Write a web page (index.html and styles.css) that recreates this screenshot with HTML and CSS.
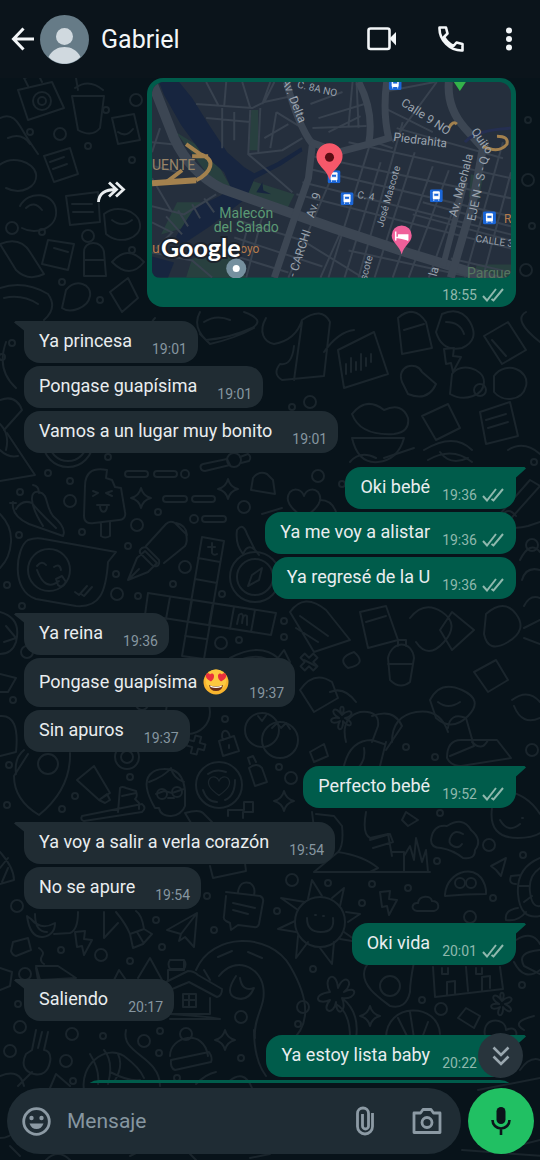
FILE: index.html
```html
<!DOCTYPE html>
<html lang="es">

<head>
    <meta charset="UTF-8">
    <meta name="viewport" content="width=device-width, initial-scale=1.0">
    <title>Gabriel</title>
    <link rel="stylesheet" href="styles.css">
</head>

<body>
    <!-- wallpaper -->
    <svg class="wallpaper" viewBox="0 0 540 1160" preserveAspectRatio="xMidYMin slice" aria-hidden="true">
        <defs>
            <path id="star" d="M0-10Q2-2 10 0Q2 2 0 10Q-2 2-10 0Q-2-2 0-10z" />
            <path id="bolt" d="M-8-11L2-12L1-4L9-3L1 12L-1 3L-6 4z" />
            <path id="plane" d="M-15 5L15-12L12 22L3 12L-3 16L-1 9zM15-12L-1 9" />
            <path id="cloud" d="M-9 7C-16 6-14-2-8-1C-7-9 5-9 6-3C14-3 14 6 8 7z" />
            <path id="flower" d="M0-3C-6-14 6-14 0-3C10-12 14-2 3 0C14 5 8 12 1 3C2 15-8 13-2 3C-12 9-15-2-3 0C-14-6-7-14 0-3z" />
            <path id="cross" d="M-3-9L3-9L3-3L9-3L9 3L3 3L3 9L-3 9L-3 3L-9 3L-9-3L-3-3z" />
            <path id="heart" d="M0 16C-14 6-20-2-14-10C-9-15-2-12 0-6C2-12 9-15 14-10C20-2 14 6 0 16z" />
            <path id="lock" d="M-9-3L6-8L11 7L-5 12zM-5-4C-9-14 0-17 2-7M1 1v3" />
            <g id="ring"><circle r="6" /></g>
            <g id="dot"><circle r="3" /></g>
        </defs>

        <!-- top -->
        <path d="M18 90l34-8 12 26-36 12zM28 86l-4-8 14-4 4 8M75 88q14-10 28 2M72 96l6 34q14 8 22-2l4-32zM78 90l-2-12M0 118q12-6 20 8T38 154M8 138q14-6 22 6" />
        <circle cx="42" cy="101" r="9" />
        <circle cx="42" cy="101" r="4" />
        <path d="M-2 166c14-12 36-4 38 8s-14 22-30 14M44 156l26-8 8 26-24 8zM50 162l14-5M53 169l14-5M112 118l22-4 6 26-22 4zM118 132q8 6 15-3" />
        <path d="M20 206c8-16 34-14 36 4s-20 26-34 18M26 208q8-8 16 2M66 196l32-4 2 30-30 3zM72 204h20M73 212h20M104 214c12-10 34-4 36 10s-20 22-34 10zM112 220q10 8 20 0" />
        <path d="M0 244q20-8 30 8l14 22q-16 8-28-4zM48 240l26 4-6 26-26-6zM54 248l14 4M84 252c0-12 18-12 20 0l2 24H84zM84 260h20M112 262q16-18 32 0q-14 18-32 0" />
        <path d="M0 288q24-8 48 6q10 14-4 26M4 298q18-4 34 6M66 290c10-12 26-6 24 6s-20 18-28 12zM110 292l18-14 10 20-16 14z" />
        <path d="M6 342q-10 28 10 46M0 400q16-6 22 10L4 430M0 424q10 10 6 26" />
        <path d="M155 318c-10 10-4 30 8 34s24-4 28-14M200 312q-8 14 6 28q24-2 46-12q14-8-8-16M204 322q12-8 26-2M200 334l10 10q26-6 44-16" />
        <path d="M266 318c-8 14-2 24 8 26q22-4 28-24q20-14 28 2l-6 54l-42 4q-10-6-2-16q12 2 14-18M302 322l-8 58M324 352q14-20 30-22M338 350l36-18 14 42-44 14zM346 364v10M351 358v14M356 362v8M361 354v16M366 358v8M371 354v8" />
        <path d="M398 318q16-14 28 4l6 26-30 6zM404 330l20-6M442 314q18-8 28 8q10 18-8 26q-20 4-26-16zM446 322q14 0 18 12M484 336l24-14 18 28-24 14zM492 340l14 16M526 312q-14 8 14 30" />
        <path d="M402 382c-6-16 14-22 20-10l14 12q-8 18-28 10zM452 374c8-12 32-6 32 8s-20 20-34 12zM494 376c12-16 36-6 32 10s-24 16-32 6zM352 414q14-18 32-4q18-8 24 8q2 14-14 16-34 2-42-20M422 416l26-12 12 24-24 12zM480 412l30-10 8 34-32 8zM486 420l20-6M488 428l20-6" />
        <path d="M352 438l52 0q-6 22-26 24t-26-24M424 450q30-18 48 0M440 452q10 14 28 6M508 450q16-10 32 4" />

        <!-- middle left -->
        <path d="M0 481l35-6-28-42M0 450q8 8 18 6" />
        <circle cx="68" cy="442" r="25" />
        <circle cx="68" cy="442" r="19" />
        <path d="M13 502q-2 14 16 22l34 12q4-8-10-20c-8-10-4-22-14-24s-10 12 4 34M16 509q6-10 16-6q8 10 24 25M33 485q6 1 6 8M10 503h6" />
        <path d="M107 470c-16-3-22 4-22 16l-1 30c0 6 4 8 10 7l25-3c5 0 7-4 6-8l-4-24-6-1-3-7-6-2zM101 523v13q4 3 9 0v-14M93 491l5 2-5 3M112 491l-6 2 6 3M97 505h12M100 505c0 9 7 9 7 0" />
        <rect x="125" y="471" width="23" height="6" rx="3" />
        <rect x="154" y="471" width="23" height="6" rx="3" />
        <circle cx="185" cy="474" r="4" />
        <rect x="163" y="496" width="24" height="6" rx="3" />
        <rect x="192" y="496" width="23" height="6" rx="3" />
        <circle cx="194" cy="519" r="4" />
        <rect x="202" y="516" width="24" height="6" rx="3" />
        <path d="M203 464l24-5 3 6-25 6c-5 0-6-6-2-7zM240 457l8-3q4 3 1 7l-8 2" />
        <circle cx="234" cy="460" r="7" />
        <path d="M128 580l9-22 8-7 12 12-9 9zM128 580l11-11M142 548q4-2 6 1l11 11q1 5-2 6-4 1-7-3l-10-10q-1-3 2-5M146 546l20-22q4-4 9-1l11 11q2 7-1 12l-21 17M176 523q10 2 11 12" />
        <path d="M28 540q8-3 16-1l72 13-8 10c-2 30-8 46-32 44l-40-7c-26-8-20-52-8-59M37 566q5-6 9-1M54 567q6-4 7 3M37 570q8 22 22 11M56 579l6-3 4 6q-4 7-8 3zM75 592l4 3 8-9M81 594l3 2 8-9" />
        <circle cx="49" cy="570" r="21" />
        <path d="M202 537l22 4-20 118-22-3zM198 558l22 4M195 579l22 4M148 593l128 20-5 22-126-20zM170 597l-4 22M192 600l-4 22M213 603l-4 22M234 607l-4 22M255 610l-4 22M185 636l21 3M212 543v10q2 3 5 1M208 547h7M237 624l2-9q3-3 4 1l-1 7q1-10 5-7l0 9" />
        <circle cx="255" cy="577" r="25" />
        <circle cx="255" cy="577" r="18" />
        <path d="M248 586l4-11 10-7-3 12zM243 554q-8-10-6-24q6-8 10 4l9 18M243 554q6-14 16 1" />
        <path d="M0 514q12 12 11 28T0 568M0 612q22 6 16 30q-4 12-16 12M6 626l10 12-12 4M0 674l16 4-8 14-8 0M0 716q20-2 16 36l-16 4" />

        <!-- middle right -->
        <path d="M253 478q6-8 14-4l6 6 2 14-24-4z" />
        <use href="#heart" x="304" y="502" />
        <path d="M262 514l20-6M320 500q12 0 16 12" />
        <path d="M350 462q10-12 26-4M384 458l30-10M428 460q24-14 44 2M500 514l30-34 10 6-34 38zM516 516q-8-10-14 0q2 16 26 10l12-4" />
        <path d="M520 560q10-20 20-8M522 580q4-14 18-10M524 606q6-12 16-8M524 628l16-8" />
        <path d="M290 612q14-20 36-2l24 30-36 12zM300 616l28 20M296 628l22 14M360 612l26-6 12 34-30 8zM366 622l20-6M410 618q14-18 32-6t2 30-28 0M452 612l22 18-22 20-12-20zM486 614q18-16 30 0t-8 28-24-8zM524 638l16 6" />
        <path d="M230 658q30-16 48 0l6-8 6 12M240 660q22-8 34 4M304 660l12 6M300 690q14-20 32-8l6 16-24 14zM330 692q14-6 26 10M348 668q-12-10 6-16q14 12-6 16" />
        <path d="M388 658c4-18 24-18 26 0l-4 24q-10 8-20-2zM388 664h25M398 646v-6h8v6M430 700q10-20 32-10t6 26-32 2zM438 702q10 8 22 0M474 672l22-12 12 20-20 12zM512 700q16-12 28 2M514 706q8 20 26 12M346 742q-6-24 14-30q20-2 18 14l-6 16M372 716q22-8 30 10l-16 24" />
        <path d="M392 742q0-26 24-30t32 20M448 728q2-16 18-10l8 28-24 10" />
        <use href="#lock" x="228" y="744" />
        <circle cx="262" cy="730" r="17" />
        <circle cx="280" cy="740" r="18" />
        <path d="M258 716l4 5 5-7M272 728l5-5 4 5 5-5 4 6" />
        <use href="#cross" transform="translate(196 745) rotate(15)" />
        <use href="#cross" transform="translate(309 662) rotate(45)" />
        <circle cx="188" cy="712" r="22" />

        <!-- lower left -->
        <path d="M28 754l-14 22q0 24 25 39q32-26 31-62M16 774q-2-16 8-24" />
        <circle cx="48" cy="764" r="10" />
        <circle cx="127" cy="757" r="12" />
        <circle cx="127" cy="757" r="6" />
        <path d="M77 780l17-14 16 27-11 7zM99 800l8-6 3 6-5 3zM82 816l60-12q5 4 0 8l-58 9q-4-1-2-5M118 812l2-24q2-2 6 0l10 3q2 6-1 8l4 4v6M122 796l14-3" />
        <path d="M155 808c-20-34 0-42 18-38q10 4 12 20v16c-4 12-24 14-26 2zM149 782q16-6 22-14q2 10 13 14M156 794l8-3 8 2 12-4M168 798h6M185 813q14-4 18 0l9 9M185 813l6 10" />
        <circle cx="162" cy="794" r="5" />
        <circle cx="177" cy="792" r="5" />
        <circle cx="219" cy="785" r="23" />
        <path d="M203 790q4 12 14 12M208 774q8-6 18-2M235 780q0 16-10 20" />
        <use href="#heart" transform="translate(219 785) scale(.65)" />
        <path d="M249 768q8-6 13 0l5 14-12 4zM250 764l-2-6 5-2 3 6M228 816l0-6 16 0v-8h9v10h-10v6" />
        <path d="M0 852q14 16 14 28l-14 4M0 868l8-10M2 882l6-14M27 916q3 22 16 21q12-2 12-14q-14 8-24-4zM35 914q0 18 12 18M78 912q0 18-8 21l-16 1M104 912v26l14-15M116 912q10 12 14 22l14-5q-2-14-8-18M130 934l3 14 10-4 9-10-8-5M137 932l6 10M210 866l3 12 33-7-1-8" />
        <path d="M226 892l34 4q4 2 3 6l-4 22q-1 4-5 3l-16-2-7 5-1-7-4-2q-3-2-2-5l2-20M233 903l22 5M233 910l15 4M238 892q2-12 12-9q6 4 4 12" />
        <use href="#plane" x="182" y="925" />
        <use href="#bolt" x="83" y="943" />
        <path d="M13 942l15-4 3 12-15 6q-4-1-5-5zM39 948q6 4 3 8-3 5 2 8M36 966l22 0 18 12-36 2zM38 980l-2-12M114 980l5-10 7 10M138 978l12-20 12 22M0 968l12 4-2 14-10 4" />
        <path d="M168 980v-10h16v-10M170 960h14q3 4 0 9h-14q-3-5 0-9M162 984l26-13q6 0 10 4l24 14q0 7-5 8l-28-15-24 10M210 998v16h-40M183 994h13v13h-13zM189 994v13M183 1000h13M170 1014q34 2 50 5h-50" />
        <path d="M196 970c16-38 74-38 94-4s20 60 0 76M219 976c16-20 40-10 44 10s-10 30-8 52M218 957l14-6M248 952l14 6M204 970l6 10" />
        <path d="M240 978q2 14 14 10q-6 14-18 10t0-22" />

        <!-- lower right -->
        <path d="M312 812l2 16M316 814l18 2 8 10q2 20-4 26l-24 20h116M338 852q26 4 40 16l-8 4M366 812q-4 22 4 26l18-4 4 22M370 840l20-6 3 8-20 6M392 852l12 0v20M404 856l6-10 4 14 2-22 6 24 4-12 2 22M310 752l14-8 4 12-14 6zM344 766q6-26 28-26l12 4M358 768q8-8 6-20M380 766l6-24" />
        <path d="M447 758q0-18 14-18l36 0 14 18-50 8q-10 0-14-8M472 742q10 10 16-2" />
        <circle cx="320" cy="922" r="25" />
        <path d="M307 918q0 14 14 14t12-14M315 915h1M323 916h1M308 899l4-19 10 16M332 898l12-10-4 18M346 912l14 2-12 8M344 932l14 10-18-3M334 942l-2 22-12-16M308 942l-12 16 2-22M296 932l-18-3 17-8M298 910l-17-12 24 4" />
        <use href="#bolt" x="388" y="903" />
        <use href="#cloud" x="426" y="904" />
        <use href="#star" x="284" y="801" />
        <path d="M431 840q2-16 16-14q16-10 24 4q12 10 4 20q0 10-12 8q-10-8-22-10q-10 0-10-8M463 834q-8-5-12 2t2 10 9-2" />
        <path d="M445 894c2-24 36-34 41-4v4q-20 0-41 2zM402 820l4-8 12 8-10 6zM491 866l15-8-5 18-5-6z" />
        <circle cx="460" cy="883" r="5" />
        <circle cx="471" cy="883" r="5" />
        <path d="M492 808q-4 30 26 30t32-22M500 820q8 14 20 4M500 792q24-2 40 22M522 818h1" />
        <path d="M540 858q-24 10-22 36t22 22M540 868q-12 8-10 24t10 14M518 886h12M524 902l8-6M516 884q-8 0-5-8l10-1M518 908q-14 2-12 12q12 2 20-8" />
        <path d="M364 974c0-20 40-30 50-12q-4 20-4 30q-4 18-20 14c-10-8-26-18-26-32" />
        <circle cx="390" cy="986" r="10" />
        <path d="M433 967l2 30 68-8-3-22M466 967l2 24M447 994v-12l8-1v12M482 990v-13l8-1v12M442 968v6h6v-6M476 968v6h6v-6M516 940q16-10 24 4M514 962q10 20 26 8M540 950q-24 2-16 16l16 8" />
        <path d="M330 992c-8-14 6-24 8-4c6-16 18-6 6 4c14-8 14 8-2 6c6 14-6 20-6 4c-2 14-16 10-6-2c-14 6-18-6 0-8M336 1004q14 8 14 34M342 998q18 14 14 40" />
        <use href="#star" x="370" y="1016" />
        <use href="#flower" x="502" y="1004" />
        <path d="M458 1018l8-10 14 8-6 12zM386 1038c0-36 52-36 54-4M410 1012l4 26M398 1018l10 20M428 1022l-6 16M486 1040c-8-24 20-24 20-10c12-6 14 8 4 12" />

        <!-- bottom -->
        <path d="M36 1030l-4 20-6 4c-6 12 0 18 8 20s14-2 16-12-4-12-6-12l4-18M42 1032l-4 16M32 1072l-14 14M0 1076q20-8 24 10M84 1090c-4-24 20-46 40-34q16 12 20 22M90 1054q10 16 8 30M104 1050q10 12 4 34M118 1054q6 12-4 28M110 1072q20 10 30 8" />
        <path d="M126 1030c-6 24 34 26 34 56M170 1056c0-20 34-28 38 0M171 1060l38-8q4 6 2 10l-36 8q-5-2-4-10M196 1084q10-10 20-12" />
        <circle cx="186" cy="1034" r="6" />
        <use href="#star" x="225" y="1040" />
        <path d="M50 1088l6-14 14 12M254 1030q0 30 12 46M228 1082q16-14 24 6M470 1072q20-4 40-2M520 1070q10-14 20-10M478 1090l62-12M500 1150l40-10M462 1150l80 6M524 1030q-14-8 10-14" />
        <path d="M0 1138q10 0 16-8M10 1146l10 10M46 1160q12-12 24 0M130 1156l8-4M190 1154l6 6M250 1158l20-4" />
        <use href="#star" x="141" y="498" />
        <use href="#star" x="228" y="489" />
        <use href="#star" x="500" y="110" />
        <use href="#star" x="422" y="490" />
        <use href="#bolt" x="452" y="360" />
        <use href="#flower" x="342" y="718" />

        <!-- loose circles -->
        <use href="#ring" x="70" y="501" />
        <use href="#ring" x="137" y="525" />
        <use href="#ring" x="185" y="567" />
        <use href="#ring" x="117" y="594" />
        <use href="#ring" x="244" y="507" />
        <use href="#ring" x="310" y="402" />
        <use href="#ring" x="221" y="643" />
        <use href="#ring" x="17" y="906" />
        <use href="#ring" x="101" y="955" />
        <use href="#ring" x="25" y="974" />
        <use href="#ring" x="20" y="1027" />
        <use href="#ring" x="72" y="1034" />
        <use href="#ring" x="144" y="1041" />
        <use href="#ring" x="66" y="1061" />
        <use href="#ring" x="10" y="1051" />
        <use href="#ring" x="241" y="1017" />
        <use href="#ring" x="292" y="880" />
        <use href="#ring" x="470" y="917" />
        <use href="#ring" x="489" y="845" />
        <use href="#ring" x="441" y="1009" />
        <use href="#ring" x="303" y="1007" />
        <use href="#ring" x="318" y="476" />
        <use href="#ring" x="532" y="545" />
        <use href="#ring" x="291" y="778" />
        <use href="#ring" x="532" y="750" />
        <use href="#ring" x="27" y="652" />
        <use href="#ring" x="142" y="704" />
        <use href="#ring" x="136" y="100" />
        <use href="#ring" x="60" y="134" />
        <use href="#ring" x="88" y="236" />
        <use href="#ring" x="12" y="228" />
        <use href="#ring" x="528" y="180" />
        <use href="#ring" x="526" y="270" />
        <use href="#ring" x="480" y="390" />
        <use href="#dot" x="12" y="343" />
        <use href="#dot" x="2" y="357" />
        <use href="#dot" x="48" y="473" />
        <use href="#dot" x="70" y="481" />
        <use href="#dot" x="20" y="492" />
        <use href="#dot" x="108" y="457" />
        <use href="#dot" x="82" y="532" />
        <use href="#dot" x="19" y="535" />
        <use href="#dot" x="128" y="546" />
        <use href="#dot" x="158" y="512" />
        <use href="#dot" x="116" y="574" />
        <use href="#dot" x="173" y="584" />
        <use href="#dot" x="138" y="596" />
        <use href="#dot" x="7" y="585" />
        <use href="#dot" x="22" y="606" />
        <use href="#dot" x="222" y="594" />
        <use href="#dot" x="239" y="640" />
        <use href="#dot" x="284" y="621" />
        <use href="#dot" x="284" y="637" />
        <use href="#dot" x="13" y="700" />
        <use href="#dot" x="225" y="719" />
        <use href="#dot" x="9" y="765" />
        <use href="#dot" x="130" y="777" />
        <use href="#dot" x="75" y="796" />
        <use href="#dot" x="62" y="809" />
        <use href="#dot" x="7" y="805" />
        <use href="#dot" x="207" y="896" />
        <use href="#dot" x="156" y="920" />
        <use href="#dot" x="162" y="947" />
        <use href="#dot" x="214" y="930" />
        <use href="#dot" x="61" y="950" />
        <use href="#dot" x="130" y="961" />
        <use href="#dot" x="18" y="1004" />
        <use href="#dot" x="103" y="1036" />
        <use href="#dot" x="160" y="1031" />
        <use href="#dot" x="159" y="1053" />
        <use href="#dot" x="73" y="1081" />
        <use href="#dot" x="241" y="1058" />
        <use href="#dot" x="177" y="1078" />
        <use href="#dot" x="279" y="767" />
        <use href="#dot" x="406" y="747" />
        <use href="#dot" x="435" y="757" />
        <use href="#dot" x="440" y="813" />
        <use href="#dot" x="437" y="861" />
        <use href="#dot" x="523" y="855" />
        <use href="#dot" x="372" y="884" />
        <use href="#dot" x="408" y="888" />
        <use href="#dot" x="328" y="883" />
        <use href="#dot" x="493" y="898" />
        <use href="#dot" x="362" y="903" />
        <use href="#dot" x="277" y="911" />
        <use href="#dot" x="313" y="969" />
        <use href="#dot" x="522" y="985" />
        <use href="#dot" x="422" y="1000" />
        <use href="#dot" x="298" y="1024" />
        <use href="#dot" x="342" y="484" />
        <use href="#dot" x="292" y="407" />
        <use href="#dot" x="534" y="462" />
        <use href="#dot" x="106" y="110" />
        <use href="#dot" x="30" y="132" />
        <use href="#dot" x="88" y="146" />
        <use href="#dot" x="132" y="160" />
        <use href="#dot" x="42" y="232" />
        <use href="#dot" x="132" y="250" />
        <use href="#dot" x="62" y="282" />
        <use href="#dot" x="100" y="300" />
        <use href="#dot" x="528" y="120" />
        <use href="#dot" x="532" y="226" />
    </svg>

    <header class="topbar">
        <button class="icon-btn" aria-label="Volver">
            <svg width="24" height="24" viewBox="0 0 24 24" fill="none" stroke="currentColor" stroke-width="3">
                <path d="M23 12H3M12.500 1.500L2.500 12L12.500 22.500" />
            </svg>
        </button>
        <svg class="avatar" viewBox="0 0 49 49" aria-hidden="true">
            <circle cx="24.500" cy="24.500" r="24.500" fill="#667b87" />
            <circle cx="24.500" cy="21.500" r="8.500" fill="#d0d9df" />
            <path d="M8.500 42C12 35 18 32 24.500 32S37 35 40.500 42C32 51 17 51 8.500 42z" fill="#d0d9df" />
        </svg>
        <h1 class="name">Gabriel</h1>
        <nav class="actions">
            <button class="icon-btn" aria-label="Videollamada">
                <svg width="30" height="24" viewBox="0 0 30 24">
                    <rect x="1.500" y="1.500" width="21" height="20.500" rx="2" fill="none" stroke="currentColor" stroke-width="2.600" />
                    <path d="M22.500 11.500L29 5V18.500z" fill="currentColor" />
                </svg>
            </button>
            <button class="icon-btn" aria-label="Llamar">
                <svg width="26" height="26" viewBox="0 0 26 26" fill="none" stroke="currentColor" stroke-width="2.600" stroke-linejoin="round">
                    <path d="M1.500 1.500H8L9.500 7.500L6 11C8.500 15.500 11 18 15.500 20L18.500 16.500L24.500 18V24.500C12 25 1 14 1.500 1.500z" />
                </svg>
            </button>
            <button class="icon-btn" aria-label="Más opciones">
                <svg width="8" height="24" viewBox="0 0 8 24" fill="currentColor">
                    <circle cx="4" cy="3.500" r="3" />
                    <circle cx="4" cy="12" r="3" />
                    <circle cx="4" cy="20.500" r="3" />
                </svg>
            </button>
        </nav>
    </header>

    <svg class="defs" aria-hidden="true">
        <symbol id="ticks" viewBox="0 0 22 14">
            <path d="M1 8L5 12.500L14 1M9.500 11L11.500 12.500L21 1" fill="none" stroke="currentColor" stroke-width="2" />
        </symbol>
        <symbol id="bus" viewBox="0 0 13 13">
            <rect width="13" height="13" rx="2" fill="#1a66d8" />
            <rect x="3" y="2" width="7" height="8" rx="1" fill="#fff" />
            <path d="M4 4h5v3H4zM4 10v1.500M9 10v1.500" fill="#1a66d8" stroke="#fff" stroke-width=".8" />
        </symbol>
    </svg>

    <main class="chat">
        <div class="row sent">
            <button class="icon-btn forward" aria-label="Reenviar">
                <svg width="29" height="22" viewBox="0 0 29 22" fill="none" stroke="currentColor" stroke-width="2.800">
                    <path d="M1.500 21C2 12 8 8.500 19 8.500M12 1.500L19.500 8.500L12 15.500M19 1.500L26.500 8.500L19 15.500" />
                </svg>
            </button>
            <div class="bubble location">
                <svg class="map" viewBox="0 0 358 195" preserveAspectRatio="xMidYMid slice" role="img" aria-label="Ubicación">
                    <rect width="358" height="195" fill="#252f3d" />
                    <!-- parks -->
                    <g fill="#28403f">
                        <path d="M24 50L60 72L78 104L60 98L36 66z" />
                        <path d="M98 98L142 112L134 128L94 114z" />
                        <path d="M99 28h7v40h-9zM40 176l34-6 20 25H34zM25 120l24 0-20 26-20 6z" />
                        <path d="M324 182h34v13h-38zM318 92l12 3-4 22-10-2z" />
                    </g>
                    <!-- water -->
                    <g fill="#17253f">
                        <path d="M7 0H27L40 16L55 40L75 70L92 85L102 91L125 80L149 65L150 69L129 83L102 97L94 116L59 143L29 163L24 154L42 126L69 113L79 106L72 90L49 70L29 43L12 13z" />
                        <path d="M0 174L22 180L16 195H0z" />
                        <path d="M104 110l6-10 1 8 8 4z" />
                    </g>
                    <!-- small streets -->
                    <g fill="none" stroke="#38424f" stroke-width="2">
                        <path d="M44 22L100 26L112 20L122 0M54 0L66 23M74 0L72 24M90 0L98 26M70 26V66M54 36L98 40M98 28L96 72L124 96L140 110M108 26L106 70M112 20L140 14M124 30L150 46M118 0L110 22M82 30V58M96 72L130 68L150 56M112 56L136 42M124 30L118 66" />
                        <path d="M0 96L20 130M0 124L32 132L64 112M8 46L0 70M0 60L20 62M2 84L26 90M14 134L30 152M26 128L36 144M40 122L48 136M0 140L20 150L4 166M52 116L62 130M0 170L40 178L60 195" />
                        <path d="M94 150L82 195M110 134L94 195M146 124L122 195M190 70L136 195M188 150L168 195M218 60L176 195M228 80L192 195M250 40L206 195M262 70L222 195M280 84L240 195M296 88L256 195M312 95L276 195M350 60L312 195M358 90L330 195" />
                        <path d="M160 74L358 116M154 86L358 134M150 100L358 152M144 112L358 166M196 60L358 96M160 136L176 142M196 168L320 195M86 138L150 158L210 195M82 155L170 184M78 172L136 190M260 132L358 158M270 120L358 144M298 176L358 190" />
                        <path d="M158 22L190 10M166 36L212 22M160 46L214 44M200 0L196 44M176 50L208 34M204 0L206 46M230 10L282 0M232 26L280 50M240 60L284 0M244 46L350 76M222 60L240 66" />
                    </g>
                    <!-- main streets -->
                    <g fill="none" stroke="#3c4653">
                        <path d="M0 0L22 56Q38 90 69 106L125 126L182 146L254 170L358 202" stroke-width="10" />
                        <path d="M134 0Q146 44 160 62L156 96L144 130L122 195" stroke-width="7" />
                        <path d="M158 60L186 70L216 62L236 56Q230 30 234 0M216 62Q222 30 206 0" stroke-width="7" />
                        <path d="M296 0Q294 26 312 46L330 66L320 120L298 195" stroke-width="8" />
                        <path d="M312 100L290 184" stroke-width="6" />
                    </g>
                    <path d="M312 60Q322 48 358 46" fill="none" stroke="#252f52" stroke-width="3" />
                    <g fill="none" stroke="#a3814e">
                        <path d="M0 101L44 98" stroke-width="6" />
                        <path d="M34 62L48 72Q60 76 58 84T44 98M40 74L56 74M30 88L14 100" stroke-width="4" />
                        <path d="M296 46Q300 38 304 42M330 64Q346 72 354 62Q356 54 344 54" stroke-width="3" />
                    </g>

                    <g class="street" text-anchor="middle">
                        <text transform="translate(138 20) rotate(68)">Av. Delta</text>
                        <text class="tiny" transform="translate(164 10) rotate(13)">C. 8A NO</text>
                        <text transform="translate(271 38) rotate(33)">Calle 9 NO</text>
                        <text transform="translate(267 62) rotate(7)">Piedrahita</text>
                        <text transform="translate(165 124) rotate(-73)">Av. 9</text>
                        <text transform="translate(151 172) rotate(-72)">- CARCHI</text>
                        <text class="tiny" transform="translate(239 115) rotate(-74)">José Mascote</text>
                        <text class="tiny" transform="translate(213 117) rotate(8)">C. 4</text>
                        <text transform="translate(312 104) rotate(-75)">Av. Machala</text>
                        <text transform="translate(329 107) rotate(-78)">EJE N - S - Q</text>
                        <text transform="translate(326 61) rotate(55)">Quito</text>
                        <text class="tiny" transform="translate(341 162) rotate(8)">CALLE 3</text>
                        <text class="tiny" transform="translate(217 186) rotate(-75)">scote</text>
                        <text transform="translate(285 190) rotate(-75)">la</text>
                    </g>
                    <g class="place">
                        <text x="0" y="88" class="bridge">UENTE</text>
                        <text x="94" y="136" text-anchor="middle">Malecón</text>
                        <text x="94" y="150" text-anchor="middle">del Salado</text>
                        <text x="314" y="195" class="dim">Parque</text>
                        <text x="0" y="171" class="shop">u</text>
                        <text x="88" y="171" class="shop small">oyo</text>
                        <text x="351" y="141" class="shop small">R</text>
                    </g>
                    <text x="9" y="175" class="google">Google</text>

                    <use href="#bus" x="236" y="-5" width="13" height="13" />
                    <use href="#bus" x="175" y="88" width="13" height="13" />
                    <use href="#bus" x="188" y="110" width="13" height="13" />
                    <use href="#bus" x="277" y="107" width="13" height="13" />
                    <use href="#bus" x="330" y="129" width="13" height="13" />
                    <path d="M301 0H313L307 9z" fill="#34b24a" />
                    <circle cx="84" cy="186" r="10" fill="#76909f" />
                    <circle cx="84" cy="186" r="3.500" fill="#fff" />
                    <path d="M249 172C247 163 239 160 239 153A10 10 0 0 1 259 153C259 160 251 163 249 172z" fill="#f0609a" />
                    <path d="M243 149v9M243 155h12v3M246 152.500h9v2h-9z" fill="#fff" stroke="#fff" stroke-width="1.500" />
                    <path d="M177 98C175 87 164 84 164 74A13 13 0 0 1 190 74C190 84 179 87 177 98z" fill="#f7586a" />
                    <circle cx="177" cy="75" r="4.500" fill="#5c0d14" />
                </svg>
                <span class="time">18:55 <svg class="ticks"><use href="#ticks" /></svg></span>
            </div>
        </div>

        <div class="row first">
            <div class="bubble"><p>Ya princesa</p><span class="time">19:01</span></div>
        </div>
        <div class="row">
            <div class="bubble"><p>Pongase guapísima</p><span class="time">19:01</span></div>
        </div>
        <div class="row">
            <div class="bubble"><p>Vamos a un lugar muy bonito</p><span class="time">19:01</span></div>
        </div>

        <div class="row sent first">
            <div class="bubble"><p>Oki bebé</p><span class="time">19:36 <svg class="ticks"><use href="#ticks" /></svg></span></div>
        </div>
        <div class="row sent">
            <div class="bubble"><p>Ya me voy a alistar</p><span class="time">19:36 <svg class="ticks"><use href="#ticks" /></svg></span></div>
        </div>
        <div class="row sent">
            <div class="bubble"><p>Ya regresé de la U</p><span class="time">19:36 <svg class="ticks"><use href="#ticks" /></svg></span></div>
        </div>

        <div class="row first">
            <div class="bubble"><p>Ya reina</p><span class="time">19:36</span></div>
        </div>
        <div class="row">
            <div class="bubble with-emoji">
                <p>Pongase guapísima
                    <svg class="emoji" viewBox="0 0 26 26" role="img" aria-label="Cara con ojos de corazón">
                        <circle cx="13" cy="13" r="12.500" fill="#f9b52e" />
                        <circle cx="13" cy="11" r="10.500" fill="#fdc940" />
                        <path d="M8 12.500C4.500 10.500 2 8.500 3 5.500C4 3.500 6.500 4 7 5.500C8 4 10.500 4 11 6.500C11.300 9 10 11 8 12.500z" fill="#e9303c" />
                        <path d="M18 12.500C21.500 10.500 24 8.500 23 5.500C22 3.500 19.500 4 19 5.500C18 4 15.500 4 15 6.500C14.700 9 16 11 18 12.500z" fill="#e9303c" />
                        <path d="M6 16Q13 19 20 16Q19 22 13 22T6 16z" fill="#6b2f16" />
                        <path d="M7 16.500Q13 19 19 16.500L18.500 18Q13 20 7.500 18z" fill="#fff" />
                    </svg>
                </p>
                <span class="time">19:37</span>
            </div>
        </div>
        <div class="row">
            <div class="bubble"><p>Sin apuros</p><span class="time">19:37</span></div>
        </div>

        <div class="row sent first">
            <div class="bubble"><p>Perfecto bebé</p><span class="time">19:52 <svg class="ticks"><use href="#ticks" /></svg></span></div>
        </div>

        <div class="row first">
            <div class="bubble"><p>Ya voy a salir a verla corazón</p><span class="time">19:54</span></div>
        </div>
        <div class="row">
            <div class="bubble"><p>No se apure</p><span class="time">19:54</span></div>
        </div>

        <div class="row sent first">
            <div class="bubble"><p>Oki vida</p><span class="time">20:01 <svg class="ticks"><use href="#ticks" /></svg></span></div>
        </div>

        <div class="row first">
            <div class="bubble"><p>Saliendo</p><span class="time">20:17</span></div>
        </div>

        <div class="row sent first">
            <div class="bubble"><p>Ya estoy lista baby</p><span class="time">20:22 <svg class="ticks"><use href="#ticks" /></svg></span></div>
        </div>
        <div class="row sent">
            <div class="bubble next"></div>
        </div>

        <button class="to-bottom" aria-label="Ir al final">
            <svg width="18" height="20" viewBox="0 0 18 20" fill="none" stroke="currentColor" stroke-width="2.600">
                <path d="M1.500 1.500L9 9L16.500 1.500M1.500 10.500L9 18L16.500 10.500" />
            </svg>
        </button>
    </main>

    <footer class="composer">
        <div class="field">
            <button class="icon-btn" aria-label="Emojis">
                <svg width="29" height="29" viewBox="0 0 29 29" fill="currentColor">
                    <circle cx="14.500" cy="14.500" r="12.800" fill="none" stroke="currentColor" stroke-width="2.800" />
                    <circle cx="9.500" cy="11" r="2.200" />
                    <circle cx="19.500" cy="11" r="2.200" />
                    <path d="M7.500 16.500H21.500Q19.500 22 14.500 22T7.500 16.500z" />
                </svg>
            </button>
            <input type="text" placeholder="Mensaje" aria-label="Mensaje">
            <button class="icon-btn" aria-label="Adjuntar">
                <svg width="20" height="30" viewBox="0 0 20 30" fill="none" stroke="currentColor" stroke-width="2.800">
                    <path d="M17.500 7V20.500A7.500 7.500 0 0 1 2.500 20.500V7.500A5.500 5.500 0 0 1 13.500 7.500V20A3 3 0 0 1 7.500 20V8" />
                </svg>
            </button>
            <button class="icon-btn camera" aria-label="Cámara">
                <svg width="30" height="28" viewBox="0 0 30 28" fill="none" stroke="currentColor" stroke-width="2.800" stroke-linejoin="round">
                    <path d="M2 6H8.500L11 2.500H19L21.500 6H28V25.500H2z" />
                    <circle cx="15" cy="15.500" r="5" />
                </svg>
            </button>
        </div>
        <button class="mic" aria-label="Grabar audio">
            <svg width="20" height="28" viewBox="0 0 20 28">
                <rect x="5.500" y="0" width="9" height="17" rx="4.500" fill="currentColor" />
                <path d="M1.500 13A8.500 8.500 0 0 0 18.500 13M10 21.500V28" fill="none" stroke="currentColor" stroke-width="2.600" />
            </svg>
        </button>
    </footer>
</body>

</html>
```
FILE: styles.css
```css
* {
    box-sizing: border-box;
}

body {
    display: flex;
    flex-direction: column;
    position: relative;
    height: 100vh;
    margin: 0;
    overflow: hidden;
    background-color: #08131a;
    color: #e9edef;
    font-family: Roboto, "Liberation Sans", sans-serif;
}

button {
    padding: 0;
    border: none;
    background: none;
    color: inherit;
    cursor: pointer;
}

.icon-btn {
    display: flex;
    flex-shrink: 0;
}

.wallpaper {
    position: absolute;
    top: 0;
    left: 0;
    z-index: -1;
    width: 100%;
    height: 100%;
    fill: none;
    stroke: #1a252c;
    stroke-width: 2;
    stroke-linejoin: round;
    stroke-linecap: round;
}

.defs {
    position: absolute;
    width: 0;
    height: 0;
}

/* top bar */
.topbar {
    display: flex;
    align-items: center;
    flex-shrink: 0;
    height: 78px;
    padding: 0 27px 0 11px;
    background-color: #0b141b;
    color: #f3f6f8;
}

.avatar {
    flex-shrink: 0;
    width: 49px;
    height: 49px;
    margin-left: 5px;
}

.name {
    flex: 1;
    margin: 0 0 0 12px;
    font-size: 25px;
    font-weight: 400;
}

.actions {
    display: flex;
    align-items: center;
    gap: 41px;
}

/* messages */
.chat {
    display: flex;
    flex: 1;
    flex-direction: column;
    gap: 3px;
    position: relative;
    min-height: 0;
    padding: 0 24px;
    overflow: hidden;
}

.row {
    display: flex;
    flex-shrink: 0;
    align-items: center;
}

.row.sent {
    justify-content: flex-end;
}

.row.first {
    margin-top: 11px;
}

.bubble {
    display: flex;
    position: relative;
    padding: 0 11px 0 15px;
    border-radius: 16px;
    background-color: #202c33;
}

.sent .bubble {
    padding-right: 12px;
    background-color: #005c4b;
}

.first .bubble::before {
    content: "";
    position: absolute;
    top: 0;
    left: -10px;
    width: 26px;
    height: 18px;
    background-color: inherit;
    clip-path: polygon(2px 0, 100% 0, 100% 100%, 10px 100%, 10px 10px, 0 2px);
}

.first.sent .bubble::before {
    left: auto;
    right: -10px;
    clip-path: polygon(0 0, 24px 0, 26px 2px, 16px 11px, 16px 100%, 0 100%);
}

.bubble p {
    position: relative;
    margin: 0;
    padding: 8px 0 10px;
    font-size: 18px;
    line-height: 24px;
}

.bubble .time {
    display: flex;
    align-items: center;
    align-self: flex-end;
    gap: 5px;
    position: relative;
    margin: 0 0 6px 20px;
    color: #8696a0;
    font-size: 14px;
    line-height: 16px;
}

.sent .bubble .time {
    margin-left: 12px;
    color: #8fb8ad;
}

.ticks {
    width: 22px;
    height: 14px;
}

.with-emoji p {
    display: flex;
    align-items: center;
    gap: 6px;
    padding: 11px 0 12px;
}

.emoji {
    width: 26px;
    height: 26px;
}

.forward {
    margin-right: 21px;
}

.sent .bubble.location {
    display: block;
    width: 75%;
    padding: 4px 5px;
}

.map {
    display: block;
    width: 100%;
    border-radius: 12px 12px 8px 8px;
}

.sent .location .time {
    justify-content: flex-end;
    margin: 9px 7px 0;
}

.map text {
    font-family: Roboto, sans-serif;
}

.street {
    fill: #9aa3ae;
    font-size: 12px;
}

.street .tiny {
    font-size: 10px;
}

.place {
    fill: #5b9a74;
    font-size: 14px;
}

.place .bridge {
    fill: #978468;
}

.place .dim {
    fill: #55755f;
}

.place .shop {
    fill: #b57b4c;
}

.place .small {
    font-size: 12px;
}

.map .google {
    fill: #fff;
    stroke: #1c232c;
    stroke-width: 4;
    paint-order: stroke;
    font-family: Lato, sans-serif;
    font-size: 25px;
    font-weight: 700;
}

.bubble.next {
    width: 88%;
    height: 42px;
}

.to-bottom {
    display: flex;
    align-items: center;
    justify-content: center;
    position: absolute;
    right: 17px;
    bottom: 5px;
    width: 45px;
    height: 45px;
    border-radius: 50%;
    background-color: #28343c;
    color: #9aa7af;
}

/* composer */
.composer {
    display: flex;
    flex-shrink: 0;
    gap: 7px;
    padding: 5px 6px 6px 7px;
}

.field {
    display: flex;
    flex: 1;
    align-items: center;
    min-width: 0;
    padding: 0 19px 0 15px;
    border-radius: 33px;
    background-color: #1f2c34;
    color: #8c9aa4;
}

.field input {
    flex: 1;
    min-width: 0;
    padding: 0;
    margin: 0 16px;
    border: none;
    outline: none;
    background: none;
    color: #e9edef;
    font-family: inherit;
    font-size: 21px;
}

.field input::placeholder {
    color: #8696a0;
    opacity: 1;
}

.camera {
    margin-left: 37px;
}

.mic {
    display: flex;
    align-items: center;
    justify-content: center;
    flex-shrink: 0;
    width: 66px;
    height: 66px;
    border-radius: 50%;
    background-color: #21c063;
    color: #0b141a;
}
```
